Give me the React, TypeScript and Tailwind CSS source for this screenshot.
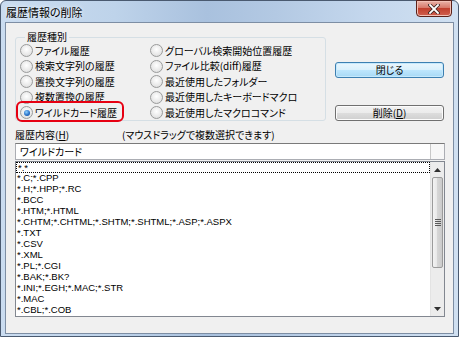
import React from 'react';

const jp = "font-['Noto_Sans_CJK_JP','Noto_Sans_CJK_SC',sans-serif] [font-feature-settings:'palt']";

const leftRadios = ['ファイル履歴', '検索文字列の履歴', '置換文字列の履歴', '複数置換の履歴', 'ワイルドカード履歴'];
const rightRadios = [
  'グローバル検索開始位置履歴',
  'ファイル比較(diff)履歴',
  '最近使用したフォルダー',
  '最近使用したキーボードマクロ',
  '最近使用したマクロコマンド',
];

const items = [
  '*.*',
  '*.C;*.CPP',
  '*.H;*.HPP;*.RC',
  '*.BCC',
  '*.HTM;*.HTML',
  '*.CHTM;*.CHTML;*.SHTM;*.SHTML;*.ASP;*.ASPX',
  '*.TXT',
  '*.CSV',
  '*.XML',
  '*.PL;*.CGI',
  '*.BAK;*.BK?',
  '*.INI;*.EGH;*.MAC;*.STR',
  '*.MAC',
  '*.CBL;*.COB',
];

function Radio({ label, checked, marked }: { label: string; checked?: boolean; marked?: boolean }) {
  return (
    <div className="relative flex h-[15.5px] items-center">
      <div className="flex h-[13px] w-[13px] shrink-0 items-center justify-center rounded-full border border-[#9a9b9b] bg-[radial-gradient(circle_at_50%_40%,#ffffff,#e8e8e8_60%,#d6d6d6)]">
        {checked && (
          <div className="h-[6px] w-[6px] rounded-full bg-[radial-gradient(circle_at_40%_35%,#8fd0ff,#2a73c9_55%,#0b3f8e)]" />
        )}
      </div>
      <span className={`ml-[2px] whitespace-nowrap text-[10px] leading-[12px] text-black ${jp}`}>{label}</span>
      {marked && (
        <div className="absolute left-[-4px] top-[-4px] h-[21px] w-[108px] rounded-[6px] border-2 border-[#e60012]" />
      )}
    </div>
  );
}

function Button({ children, primary }: { children: React.ReactNode; primary?: boolean }) {
  return (
    <div
      className={`flex h-[16px] w-[109px] items-center justify-center rounded-[3px] border text-[10px] leading-[12px] text-black ${jp} ${
        primary
          ? 'border-[#3c7fb1] bg-[linear-gradient(#eaf6fd,#d9f0fc_50%,#bee6fd_51%,#a7d9f5)] shadow-[inset_0_0_0_1px_#c6e9fc]'
          : 'border-[#707070] bg-[linear-gradient(#f2f2f2,#ebebeb_50%,#dddddd_51%,#cfcfcf)] shadow-[inset_0_0_0_1px_#fcfcfc]'
      }`}
    >
      {children}
    </div>
  );
}

export default function App() {
  return (
    <div className="h-[338px] w-[460px] overflow-hidden bg-white">
      <div className="h-[337px] w-[459px] rounded-t-[6px] border border-[#4a5a70] bg-[linear-gradient(90deg,#cadcf0,#bed3ea_25%,#a9c1de_45%,#b3c9e3_60%,#c4d7ed_80%,#d0e0f1)]">
        <div className="flex h-[21px] items-start justify-between">
          <div className={`pl-[5px] pt-[4px] text-[11px] leading-[14px] text-black [text-shadow:0_0_4px_#ffffff] ${jp}`}>
            履歴情報の削除
          </div>
          <div className="mr-[6px] mt-[-1px] flex h-[17px] w-[36px] items-center justify-center rounded-b-[4px] border border-[#5b2119] bg-[linear-gradient(#eab3a8,#d7796a_45%,#c1402e_50%,#d0604f)] shadow-[inset_0_0_0_1px_#f2c0b5]">
            <svg width="12" height="10" viewBox="0 0 12 10">
              <path d="M2 1 L10 9 M10 1 L2 9" stroke="#3a2420" strokeWidth="3.4" strokeLinecap="square" />
              <path d="M2 1 L10 9 M10 1 L2 9" stroke="#ffffff" strokeWidth="1.8" strokeLinecap="square" />
            </svg>
          </div>
        </div>

        <div className="ml-[4px] h-[312px] w-[449px] border border-[#7d8ea4] bg-[#f0f0f0]">
          <div className="flex pl-[9px] pt-[8px]">
            <fieldset className="m-0 h-[90px] w-[311px] rounded-[3px] border border-[#d5dfe5] p-0 pl-[4px]">
              <legend className={`ml-[5px] px-[2px] text-[10px] leading-[12px] text-black ${jp}`}>履歴種別</legend>
              <div className="flex">
                <div className="w-[130px]">
                  {leftRadios.map((l, i) => (
                    <Radio key={l} label={l} checked={i === 4} marked={i === 4} />
                  ))}
                </div>
                <div>
                  {rightRadios.map((l) => (
                    <Radio key={l} label={l} />
                  ))}
                </div>
              </div>
            </fieldset>
            <div className="ml-[9px] flex flex-col gap-[27px] pt-[31px]">
              <Button primary>閉じる</Button>
              <Button>
                削除(<span className="underline">D</span>)
              </Button>
            </div>
          </div>

          <div className="mt-[7px] flex h-[14px] items-center pl-[9px]">
            <span className={`w-[107px] text-[10px] leading-[12px] text-black ${jp}`}>
              履歴内容(<span className="underline">H</span>)
            </span>
            <span className={`text-[10px] leading-[12px] text-black ${jp}`}>(マウスドラッグで複数選択できます)</span>
          </div>

          <div className="ml-[9px] mt-[1px] flex h-[17px] w-[430px] border border-[#abadb3] border-t-[#7a7a7a] bg-white">
            <div className={`flex-1 pl-[4px] text-[10px] leading-[15px] text-black ${jp}`}>ワイルドカード</div>
            <div className="w-[14px] border-l border-[#c8c8c8] bg-[#f7f7f7]" />
          </div>

          <div className="ml-[9px] mt-[1px] flex h-[156px] w-[430px] border border-[#828790] bg-white">
            <div className="w-[414px] overflow-hidden font-['Liberation_Sans',Arial,sans-serif] text-[9.5px] text-black">
              {items.map((it, i) => (
                <div
                  key={it}
                  className={`h-[11px] whitespace-nowrap pl-[1px] leading-[10px] ${
                    i === 0 ? 'border border-dotted border-black pl-0' : ''
                  }`}
                >
                  {it}
                </div>
              ))}
            </div>
            <div className="flex w-[14px] flex-col border-l border-[#e3e3e3] bg-[#ececec]">
              <div className="flex h-[15px] items-center justify-center">
                <svg width="7" height="4" viewBox="0 0 7 4">
                  <path d="M0 4 L3.5 0 L7 4 Z" fill="#303030" />
                </svg>
              </div>
              <div className="mx-[1px] flex h-[91px] items-center justify-center rounded-[2px] border border-[#9b9b9b] bg-[linear-gradient(90deg,#f3f3f3,#e8e8e8_45%,#d6d6d6_50%,#cbcbcb)]">
                <div className="flex flex-col gap-[1px]">
                  <div className="h-px w-[6px] bg-[#5a5a5a]" />
                  <div className="h-px w-[6px] bg-[#5a5a5a]" />
                  <div className="h-px w-[6px] bg-[#5a5a5a]" />
                  <div className="h-px w-[6px] bg-[#5a5a5a]" />
                </div>
              </div>
              <div className="flex-1" />
              <div className="flex h-[15px] items-center justify-center">
                <svg width="7" height="4" viewBox="0 0 7 4">
                  <path d="M0 0 L7 0 L3.5 4 Z" fill="#303030" />
                </svg>
              </div>
            </div>
          </div>
        </div>
      </div>
    </div>
  );
}
